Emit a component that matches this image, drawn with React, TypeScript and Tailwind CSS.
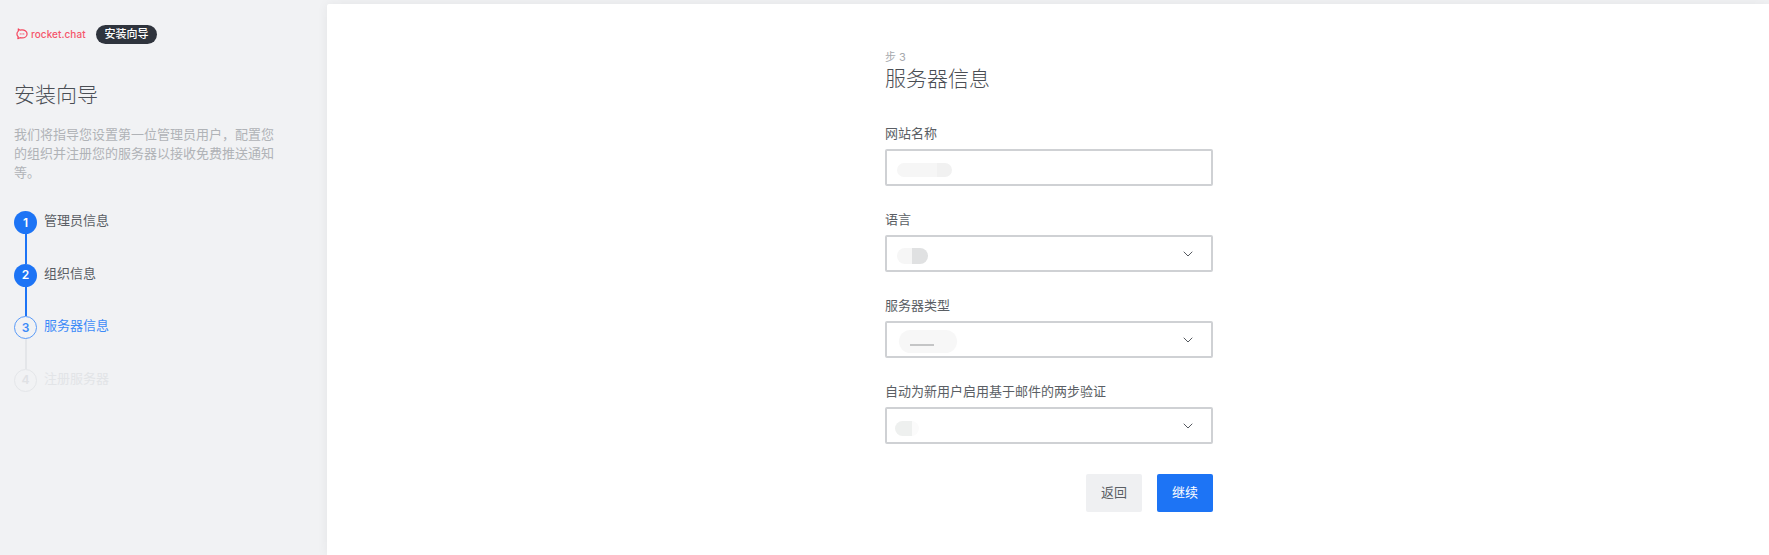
import { ChevronDown } from 'lucide-react';

const steps = [
  { n: 1, label: '管理员信息', state: 'done' },
  { n: 2, label: '组织信息', state: 'done' },
  { n: 3, label: '服务器信息', state: 'active' },
  { n: 4, label: '注册服务器', state: 'todo' },
];

const Logo = () => (
  <div className="flex items-center gap-[3px] w-[67px]">
    <svg width="12" height="12" viewBox="0 0 13 13" fill="none" className="shrink-0">
      <path d="M2.5 1v2.4C1.4 4.2 1 5.2 1 6.4c0 1.2.5 2.2 1.4 3L2 11.6l2.3-1.1c.7.2 1.4.3 2.2.3 3 0 5.5-1.9 5.5-4.4S9.500 2 6.500 2c-.8 0-1.500.1-2.200.3L2.500 1z" stroke="#f5455c" strokeWidth="1.300" strokeLinejoin="round" />
      <circle cx="4.600" cy="6.400" r=".6" fill="#f5455c" />
      <circle cx="6.500" cy="6.400" r=".6" fill="#f5455c" />
      <circle cx="8.400" cy="6.400" r=".6" fill="#f5455c" />
    </svg>
    <span className="text-[10px] leading-none font-medium text-[#f5556a] whitespace-nowrap tracking-[0.05px]">rocket.chat</span>
  </div>
);

const Step = ({ n, label, state, last }: { n: number; label: string; state: string; last: boolean }) => {
  const circle =
    state === 'done'
      ? 'bg-[#1d74f5] text-white'
      : state === 'active'
        ? 'border-[1.5px] border-[#5a9bf8] text-[#3d8bf8]'
        : 'border-[1.5px] border-[#e4e6e9] text-[#dfe1e4]';
  const text =
    state === 'done' ? 'text-[#5a5e64]' : state === 'active' ? 'text-[#3d8bf8]' : 'text-[#e2e4e7]';
  const line = state === 'done' ? 'bg-[#1d74f5]' : 'bg-[#e4e6e9]';

  return (
    <div className="flex gap-[7px] h-[52.500px]">
      <div className="flex flex-col items-center w-[23px]">
        <div className={`w-[23px] h-[23px] rounded-full flex items-center justify-center text-[12px] font-semibold shrink-0 ${circle}`}>
          {n}
        </div>
        {!last && <div className={`w-[2px] flex-1 ${line}`} />}
      </div>
      <span className={`text-[13px] leading-[19px] ${text}`}>{label}</span>
    </div>
  );
};

// pale smudges that cover the values in the original shot
const Smudge = ({ width, height, left, right, split }: { width: string; height: string; left: string; right: string; split: string }) => (
  <div className={`flex overflow-hidden rounded-full mt-[5px] ${width} ${height}`}>
    <div className={`${split} ${left}`} />
    <div className={`flex-1 ${right}`} />
  </div>
);

const Field = ({ label, select, children }: { label: string; select?: boolean; children?: React.ReactNode }) => (
  <div className="mb-[24px]">
    <div className="text-[13px] leading-[19px] text-[#5a5e64] mb-[6px]">{label}</div>
    <div className="h-[37px] border-2 border-[#cfd1d4] rounded-[2px] bg-white flex items-center justify-between pl-[10px] pr-[15px]">
      <div className="flex items-center">{children}</div>
      {select && <ChevronDown size={16} strokeWidth={1.500} color="#55595f" />}
    </div>
  </div>
);

export default function App() {
  return (
    <div className="flex h-[555px] w-[1769px] overflow-hidden bg-[#f1f2f4] font-['Inter','Noto_Sans_CJK_SC',sans-serif]">
      <aside className="w-[327px] shrink-0 pl-[14px] pr-[50px]">
        <div className="flex items-center gap-[13px] h-[20px] mt-[24px] pl-[2px]">
          <Logo />
          <span className="h-[19px] w-[61px] rounded-full bg-[#2f343d] text-white text-[11px] font-medium flex items-center justify-center">
            安装向导
          </span>
        </div>
        <h1 className="text-[21px] leading-[28px] text-[#4a4e54] font-light mt-[37px]">安装向导</h1>
        <p className="text-[13px] leading-[19px] text-[#b0b3b7] mt-[16px]">
          我们将指导您设置第一位管理员用户，配置您的组织并注册您的服务器以接收免费推送通知等。
        </p>
        <div className="mt-[29px]">
          {steps.map((s, i) => (
            <Step key={s.n} n={s.n} label={s.label} state={s.state} last={i === steps.length - 1} />
          ))}
        </div>
      </aside>
      <main className="flex-1 mt-[4px] bg-white rounded-tl-[2px] shadow-[0_0_12px_rgba(0,0,0,0.06)]">
        <div className="w-[328px] ml-[558px] pt-[45px]">
          <div className="text-[11px] leading-[16px] text-[#a5a8ad]">步 3</div>
          <h2 className="text-[21px] leading-[28px] text-[#4a4e54] font-light mb-[31px]">服务器信息</h2>
          <Field label="网站名称">
            <Smudge width="w-[55px]" height="h-[14px]" left="bg-[#f6f6f6]" right="bg-[#f1f1f1]" split="w-[40px]" />
          </Field>
          <Field label="语言" select>
            <Smudge width="w-[31px]" height="h-[16px]" left="bg-[#f6f6f6]" right="bg-[#e0e1e2]" split="w-[15px]" />
          </Field>
          <Field label="服务器类型" select>
            <div className="relative w-[58px] h-[23px] ml-[2px] mt-[3px] rounded-full bg-[#f7f7f7]">
              <div className="absolute left-[11px] top-[14px] w-[24px] h-[2px] bg-[#c4c5c6]" />
            </div>
          </Field>
          <Field label="自动为新用户启用基于邮件的两步验证" select>
            <Smudge width="w-[24px] -ml-[2px]" height="h-[15px]" left="bg-[#eef0ef]" right="bg-[#fbfbfb]" split="w-[17px]" />
          </Field>
          <div className="flex justify-end gap-[15px] mt-[30px]">
            <button className="w-[56px] h-[38px] rounded-[2px] bg-[#eff0f2] text-[#5a5e64] text-[13px]">返回</button>
            <button className="w-[56px] h-[38px] rounded-[2px] bg-[#1d74f5] text-white text-[13px]">继续</button>
          </div>
        </div>
      </main>
    </div>
  );
}
